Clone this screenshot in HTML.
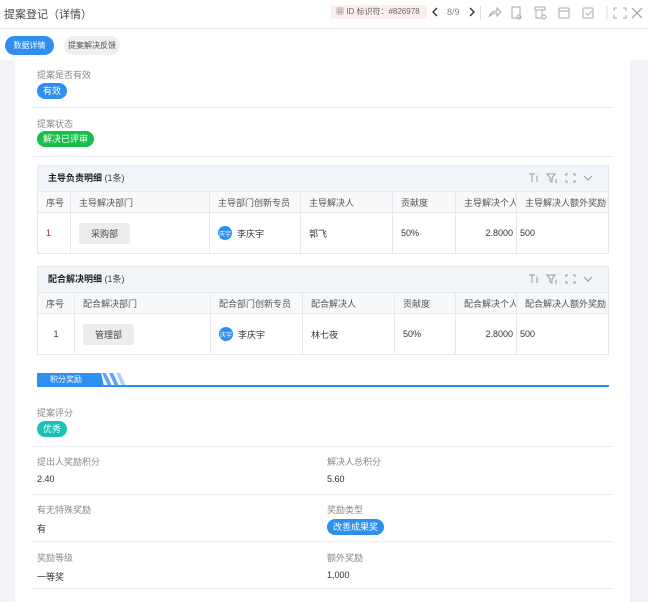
<!DOCTYPE html>
<html><head><meta charset="utf-8"><style>
*{margin:0;padding:0;box-sizing:border-box}
body{width:648px;height:602px;overflow:hidden;background:#f2f3f7;font-family:"Liberation Sans","Noto Sans CJK SC",sans-serif;font-size:9px;color:#333;position:relative}
.a{position:absolute}
.lbl{color:#888;font-size:9px}
.tag{position:absolute;color:#fff;border-radius:9px;height:16px;line-height:16px;padding:0 6px;font-size:9px}
.hl{position:absolute;height:1px;background:#ebedf0}
.tbl{position:absolute;left:37px;width:572px;border:1px solid #e6e8eb;background:#fff}
.tt{height:25px;line-height:25px;background:#f1f4f8;font-weight:bold;font-size:9px;color:#222;padding:0 10px;position:relative}
.tt span{font-weight:normal;color:#444}
.ic{position:absolute;top:6px;right:14px}
.row{display:flex;border-top:1px solid #e6e8eb}
.row div{border-right:1px solid #e6e8eb;padding:0 8px;display:flex;align-items:center;overflow:hidden;white-space:nowrap}
.row div:last-child{border-right:none}
.hr{height:21px;background:#f7f8fa;color:#555}
.dr{height:41px;background:#fff}
.pill{background:#ececec;border-radius:3px;padding:4px 12px;color:#444}
.av{width:14px;height:14px;border-radius:50%;background:#2b8ff0;color:#fff;font-size:6px;display:inline-flex;align-items:center;justify-content:center;margin-right:5px}
</style></head><body>
<div class="a" style="left:0;top:0;width:648px;height:60px;background:#fff"></div>
<div class="a" style="left:0;top:28px;width:648px;height:1px;background:#e8e8e8"></div>
<div class="a" style="left:4px;top:6px;font-size:11px;color:#444">提案登记（详情）</div>
<div class="a" style="left:331px;top:5px;width:96px;height:14px;background:#fdeeee;color:#666;font-size:8px;line-height:14px;padding-left:5px;white-space:nowrap">▦ ID 标识符：#826978</div>
<svg class="a" style="left:430px;top:5px" width="50" height="14" fill="none" stroke="#333" stroke-width="1.4"><path d="M7 3L3 7l4 4M40 3l4 4-4 4"/></svg>
<div class="a" style="left:447px;top:7px;font-size:9px;color:#888">8/9</div>
<div class="a" style="left:480px;top:6px;width:1px;height:14px;background:#ddd"></div>
<svg class="a" style="left:487px;top:5px" width="160" height="16" fill="none" stroke="#aaa" stroke-width="1">
<path d="M2 12 Q4 6 10 6 L10 3 L14 7 L10 11 L10 8 Q5 8 2 12Z"/>
<rect x="25" y="2" width="8" height="11"/><circle cx="32" cy="12" r="2"/>
<rect x="48" y="2" width="10" height="3"/><rect x="49" y="5" width="6" height="8"/><circle cx="57" cy="12" r="2"/>
<rect x="72" y="3" width="10" height="10" rx="1"/><path d="M72 6h10"/>
<rect x="96" y="3" width="10" height="10" rx="1"/><path d="M99 8l2 2 4-4"/>
<path d="M120 1v14" stroke="#ddd"/>
<path d="M127 6V3h3M136 3h3v3M139 10v3h-3M130 13h-3v-3"/>
<path d="M145 3l10 10M155 3l-10 10" stroke-width="1.3"/>
</svg>
<div class="a" style="left:5px;top:36px;width:49px;height:19px;border-radius:10px;background:#2d8ff0;color:#fff;font-size:8px;line-height:19px;text-align:center">数据详情</div>
<div class="a" style="left:64px;top:36px;width:56px;height:19px;border-radius:10px;background:#efefef;color:#555;font-size:8px;line-height:19px;text-align:center">提案解决反馈</div>
<div class="a" style="left:15px;top:60px;width:615px;height:542px;background:#fff"></div>

<div class="a lbl" style="left:37px;top:68px">提案是否有效</div>
<div class="tag" style="left:37px;top:83px;background:#2d8ff0">有效</div>
<div class="hl" style="left:32px;top:107px;width:581px"></div>
<div class="a lbl" style="left:37px;top:117px">提案状态</div>
<div class="tag" style="left:37px;top:131px;background:#19be4b">解决已评审</div>
<div class="hl" style="left:32px;top:156px;width:581px"></div>

<div class="tbl" style="top:165px">
<div class="tt">主导负责明细 <span>(1条)</span><svg class="ic" width="66" height="12" fill="none" stroke="#999" stroke-width="1"><path d="M1 2h6M4 2v8M9 4v6M9 2v0.5"/><path d="M19 2h8l-3 4v4l-2-1V6zM27 8h2M27 10h2"/><path d="M38 4V2h2M45 2h2v2M47 8v2h-2M40 10h-2V8"/><path d="M56 4l4 4 4-4"/></svg></div>
<div class="row hr"><div style="width:33px">序号</div><div style="width:139px">主导解决部门</div><div style="width:91px">主导部门创新专员</div><div style="width:92px">主导解决人</div><div style="width:63px">贡献度</div><div style="width:61px">主导解决个人</div><div style="flex:1">主导解决人额外奖励</div></div>
<div class="row dr"><div style="width:33px;color:#833">1</div><div style="width:139px"><span class="pill">采购部</span></div><div style="width:91px"><span class="av">庆宇</span>李庆宇</div><div style="width:92px">郭飞</div><div style="width:63px">50%</div><div style="width:61px;justify-content:flex-end;padding-right:3px">2.8000</div><div style="flex:1;padding-left:3px">500</div></div>
</div>

<div class="tbl" style="top:266px">
<div class="tt">配合解决明细 <span>(1条)</span><svg class="ic" width="66" height="12" fill="none" stroke="#999" stroke-width="1"><path d="M1 2h6M4 2v8M9 4v6M9 2v0.5"/><path d="M19 2h8l-3 4v4l-2-1V6zM27 8h2M27 10h2"/><path d="M38 4V2h2M45 2h2v2M47 8v2h-2M40 10h-2V8"/><path d="M56 4l4 4 4-4"/></svg></div>
<div class="row hr"><div style="width:37px">序号</div><div style="width:136px">配合解决部门</div><div style="width:92px">配合部门创新专员</div><div style="width:92px">配合解决人</div><div style="width:61px">贡献度</div><div style="width:61px">配合解决个人</div><div style="flex:1">配合解决人额外奖励</div></div>
<div class="row dr"><div style="width:37px;justify-content:center">1</div><div style="width:136px"><span class="pill">管理部</span></div><div style="width:92px"><span class="av">庆宇</span>李庆宇</div><div style="width:92px">林七夜</div><div style="width:61px">50%</div><div style="width:61px;justify-content:flex-end;padding-right:3px">2.8000</div><div style="flex:1;padding-left:3px">500</div></div>
</div>

<div class="a" style="left:37px;top:373px;width:64px;height:13px;background:#2d8ff0;color:#fff;font-size:8px;line-height:13px;padding-left:13px">积分奖励</div>
<svg class="a" style="left:98px;top:373px" width="40" height="13"><path d="M4 0h4l6 13h-4z M11 0h4l6 13h-4z" fill="#5aa8f5"/><path d="M18 0h4l6 13h-4z" fill="#a9d2fb"/><path d="M0 0h3l3 13H0z" fill="#2d8ff0"/></svg>
<div class="a" style="left:37px;top:385px;width:572px;height:2px;background:#2d8ff0"></div>

<div class="a lbl" style="left:37px;top:406px">提案评分</div>
<div class="tag" style="left:37px;top:421px;background:#19c1b7">优秀</div>
<div class="hl" style="left:32px;top:446px;width:581px"></div>
<div class="a lbl" style="left:37px;top:455px">提出人奖励积分</div>
<div class="a" style="left:37px;top:474px">2.40</div>
<div class="a lbl" style="left:327px;top:455px">解决人总积分</div>
<div class="a" style="left:327px;top:474px">5.60</div>
<div class="hl" style="left:32px;top:494px;width:581px"></div>
<div class="a lbl" style="left:37px;top:503px">有无特殊奖励</div>
<div class="a" style="left:37px;top:522px">有</div>
<div class="a lbl" style="left:327px;top:503px">奖励类型</div>
<div class="tag" style="left:327px;top:519px;background:#2d8ff0">改善成果奖</div>
<div class="hl" style="left:32px;top:541px;width:581px"></div>
<div class="a lbl" style="left:37px;top:551px">奖励等级</div>
<div class="a" style="left:37px;top:570px">一等奖</div>
<div class="a lbl" style="left:327px;top:551px">额外奖励</div>
<div class="a" style="left:327px;top:570px">1,000</div>
<div class="hl" style="left:32px;top:588px;width:581px"></div>
</body></html>
